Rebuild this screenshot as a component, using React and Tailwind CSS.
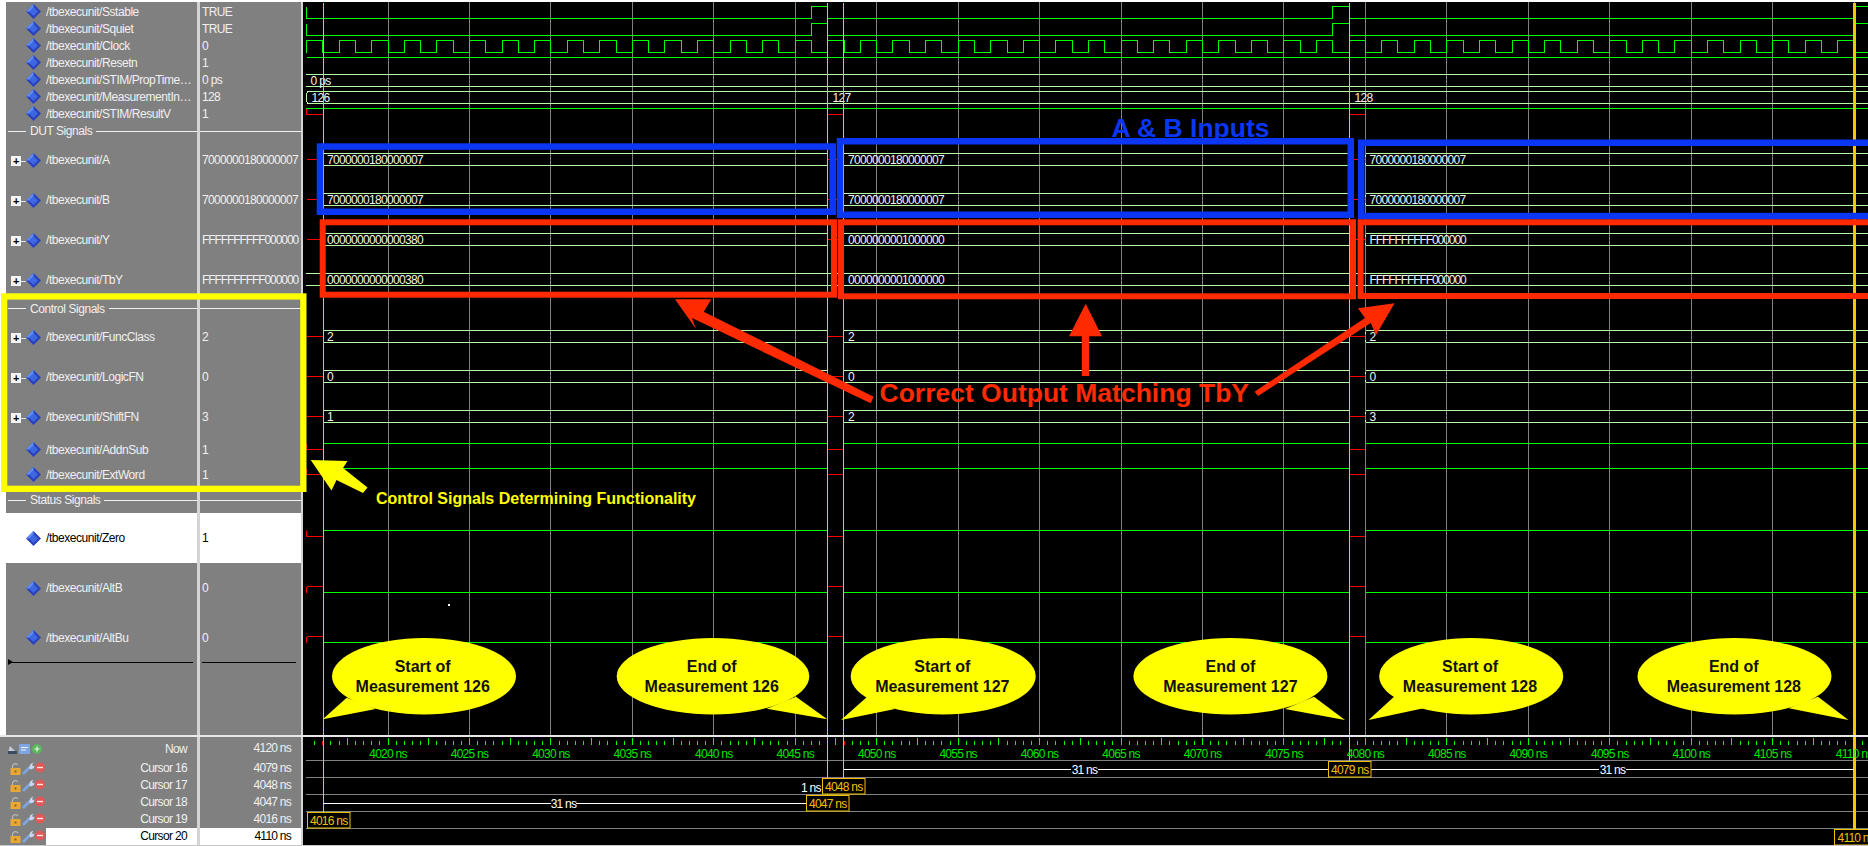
import React from "react";

// time -> pixel on the page, 4020 ns gridline sits at x=388
const X = (t) => 388 + (t - 4020) * 16.29;

const CURSORS = [
  { x: 323.5, bottom: 812 },
  { x: 827.5, bottom: 795 },
  { x: 843.5, bottom: 778 },
  { x: 1349.5, bottom: 761 },
];
const SEGS = [
  [324, 827],
  [844, 1349],
  [1366, 1868],
];
const GAPS = [
  [306.5, 323],
  [828, 843],
  [1350, 1365],
];

const rows = [
  { name: "/tbexecunit/Sstable", value: "TRUE", h: 17 },
  { name: "/tbexecunit/Squiet", value: "TRUE", h: 17 },
  { name: "/tbexecunit/Clock", value: "0", h: 17 },
  { name: "/tbexecunit/Resetn", value: "1", h: 17 },
  { name: "/tbexecunit/STIM/PropTime…", value: "0 ps", h: 17 },
  { name: "/tbexecunit/MeasurementIn…", value: "128", h: 17 },
  { name: "/tbexecunit/STIM/ResultV", value: "1", h: 17 },
  { divider: "DUT Signals", h: 18 },
  { name: "/tbexecunit/A", value: "7000000180000007", h: 40, plus: true },
  { name: "/tbexecunit/B", value: "7000000180000007", h: 40, plus: true },
  { name: "/tbexecunit/Y", value: "FFFFFFFFFF000000", h: 40, plus: true },
  { name: "/tbexecunit/TbY", value: "FFFFFFFFFF000000", h: 40, plus: true },
  { divider: "Control Signals", h: 17 },
  { name: "/tbexecunit/FuncClass", value: "2", h: 40, plus: true },
  { name: "/tbexecunit/LogicFN", value: "0", h: 40, plus: true },
  { name: "/tbexecunit/ShiftFN", value: "3", h: 40, plus: true },
  { name: "/tbexecunit/AddnSub", value: "1", h: 25 },
  { name: "/tbexecunit/ExtWord", value: "1", h: 25 },
  { divider: "Status Signals", h: 26 },
  { name: "/tbexecunit/Zero", value: "1", h: 50, selected: true },
  { name: "/tbexecunit/AltB", value: "0", h: 50 },
  { name: "/tbexecunit/AltBu", value: "0", h: 49 },
];

const cursorRows = [
  { name: "Cursor 16", value: "4079 ns" },
  { name: "Cursor 17", value: "4048 ns" },
  { name: "Cursor 18", value: "4047 ns" },
  { name: "Cursor 19", value: "4016 ns" },
  { name: "Cursor 20", value: "4110 ns", selected: true },
];

// y1/y2 are the two bus rails, red = mid line of the X state
const buses = [
  { y1: 153.5, y2: 165.5, red: 159.5, vals: ["7000000180000007", "7000000180000007", "7000000180000007"] },
  { y1: 193.5, y2: 205.5, red: 199.5, vals: ["7000000180000007", "7000000180000007", "7000000180000007"] },
  { y1: 233.5, y2: 245.5, red: 239.5, vals: ["0000000000000380", "0000000001000000", "FFFFFFFFFF000000"] },
  { y1: 330.5, y2: 342.5, red: 336.5, vals: ["2", "2", "2"] },
  { y1: 370.5, y2: 382.5, red: 376.5, vals: ["0", "0", "0"] },
  { y1: 410.5, y2: 422.5, red: 416.5, vals: ["1", "2", "3"] },
];

// green = level line, red = short X state line before each measurement
const levels = [
  { green: 443.5, red: 449.5 },
  { green: 468.5, red: 474.5 },
  { green: 530.5, red: 536.5 },
  { green: 592.5, red: 586.5 },
  { green: 642.5, red: 636.5 },
];

const bubbles = [
  { cx: 424, rx: 92, tail: "346.7,697.7 322.7,719.3 375.7,709", tx: 422.7, a: "Start of", b: "Measurement 126" },
  { cx: 713, rx: 96.3, tail: "796,696.7 827.3,719.3 766.7,708.7", tx: 711.7, a: "End of", b: "Measurement 126" },
  { cx: 943.2, rx: 92.5, tail: "866.7,697.3 841,720 895,709", tx: 942.3, a: "Start of", b: "Measurement 127" },
  { cx: 1230.4, rx: 97, tail: "1314,696.7 1345,720 1285,709", tx: 1230.4, a: "End of", b: "Measurement 127" },
  { cx: 1471.2, rx: 92, tail: "1394,696.7 1368.6,720 1423.5,708.3", tx: 1470, a: "Start of", b: "Measurement 128" },
  { cx: 1734.5, rx: 97, tail: "1818,696.7 1848.5,720 1788.7,708.3", tx: 1733.8, a: "End of", b: "Measurement 128" },
];

function range(from, to, step) {
  const out = [];
  for (let t = from; t <= to + 0.001; t += step) out.push(t);
  return out;
}

function clockPath() {
  let d = `M${X(4015)} 52.5 L${X(4015)} 40.5`;
  for (let t = 4016; t <= 4112; t++) {
    const up = t % 2 === 1;
    d += ` L${X(t)} ${up ? 52.5 : 40.5} L${X(t)} ${up ? 40.5 : 52.5}`;
  }
  return d;
}

// hex strings are squeezed so they keep the 96px width of the reference
function trackFor(v) {
  if (/F/.test(v)) return "tracking-[-1.08px]";
  return "tracking-[-0.67px]";
}

function Diamond() {
  return (
    <svg width="15" height="15" viewBox="0 0 15 15" className="shrink-0">
      <polygon points="7.5,0 15,7.5 7.5,15 0,7.5" fill="#2a40bc" />
      <polygon points="7.5,0 0,7.5 7.5,8" fill="#6190f2" />
      <polygon points="7.5,3 12,7.5 7.5,12 3,7.5" fill="#3d68e2" />
    </svg>
  );
}

function PlusBox() {
  return (
    <div className="flex items-center mt-[2px]">
      <div className="flex h-[10px] w-[10px] items-center justify-center bg-[#f4f4f4] text-[11px] leading-none font-bold text-black">
        +
      </div>
      <div className="h-px w-[5px] bg-[#e0e0e0]" />
    </div>
  );
}

function Divider({ label }) {
  return (
    <div className="flex h-full items-center pl-[2px]">
      <div className="h-px w-[18px] bg-[#f0f0f0]" />
      <span className="px-[4px] text-[#f0f0f0]">{label}</span>
      <div className="h-px flex-1 bg-[#f0f0f0]" />
    </div>
  );
}

function NameColumn() {
  return (
    <div className="w-[191px] bg-[#808080] pt-px tracking-[-0.45px]">
      {rows.map((r, i) => (
        <div key={i} style={{ height: r.h }}>
          {r.divider ? (
            <Divider label={r.divider} />
          ) : (
            <div
              className={`flex h-full items-center whitespace-nowrap ${
                r.plus ? "pl-[5px]" : "pl-[20px]"
              } ${r.selected ? "bg-white text-black" : "text-[#f0f0f0]"}`}
            >
              {r.plus && <PlusBox />}
              <Diamond />
              <span className="ml-[5px]">{r.name}</span>
            </div>
          )}
        </div>
      ))}
      <div className="relative h-px ml-[4px] mr-[4px] bg-black">
        <div className="absolute left-[-2px] top-[-3px] h-0 w-0 border-y-[3.5px] border-l-[5px] border-y-transparent border-l-black" />
      </div>
    </div>
  );
}

function ValueColumn() {
  return (
    <div className="w-[101px] bg-[#808080] pt-px">
      {rows.map((r, i) => (
        <div
          key={i}
          style={{ height: r.h }}
          className={`flex items-center pl-[2px] whitespace-nowrap ${
            r.selected ? "bg-white text-black" : "text-[#f0f0f0]"
          }`}
        >
          {r.divider ? (
            <div className="h-px flex-1 bg-[#f0f0f0] ml-[-2px]" />
          ) : (
            <span className={trackFor(r.value)}>{r.value}</span>
          )}
        </div>
      ))}
      <div className="h-px mx-[2px] mr-[5px] bg-black" />
    </div>
  );
}

function WaveBus({ y1, y2, red, vals }) {
  return (
    <g>
      {GAPS.map(([a, b], i) => (
        <line key={i} x1={a} x2={b} y1={red} y2={red} stroke="#ff0000" />
      ))}
      {SEGS.map(([a, b], i) => (
        <g key={i} stroke="#b8fca8">
          <line x1={a} x2={b} y1={y1} y2={y1} />
          <line x1={a} x2={b} y1={y2} y2={y2} />
          <line x1={a - 0.5} x2={a - 0.5} y1={y1 + 1} y2={y1 + 3} />
          <line x1={a - 0.5} x2={a - 0.5} y1={y2 - 3} y2={y2 - 1} />
          {b < 1400 && <line x1={b} x2={b} y1={y1 + 1} y2={y1 + 3} />}
          {b < 1400 && <line x1={b} x2={b} y1={y2 - 3} y2={y2 - 1} />}
        </g>
      ))}
      {vals.map((v, i) => (
        <text key={i} x={[327, 848, 1369.5][i]} y={y1 + 10.5} fill="#f4f4f4" className={trackFor(v)}>
          {v}
        </text>
      ))}
    </g>
  );
}

function Waves() {
  const grid = range(4020, 4110, 5).map(X);
  return (
    <svg viewBox="303 2 1565 733" className="block h-[733px] w-[1565px]">
      <g stroke="#808080" shapeRendering="crispEdges">
        {grid.map((x) => (
          <line key={x} x1={x} x2={x} y1={2} y2={735} />
        ))}
      </g>

      <g fill="none" stroke="#00ff00" shapeRendering="crispEdges">
        <path d="M306.5 7 V18.5 H811.5 V6.5 H827 M828 18.5 H1332.5 V6.5 H1349 M1350 18.5 H1854 V6.5 H1868" />
        <path d="M306.5 24 V35.5 H811.5 V23.5 H827 M828 35.5 H1332.5 V23.5 H1349 M1350 35.5 H1854 V23.5 H1868" />
        <path d={clockPath()} />
        <path d="M307 57.5 H1868" />
        <path d="M306 108.5 H1868" />
      </g>
      <g stroke="#ff0000" shapeRendering="crispEdges">
        <line x1={323.5} x2={323.5} y1={40} y2={53} />
        <line x1={827.5} x2={827.5} y1={6} y2={53} />
        <line x1={843.5} x2={843.5} y1={40} y2={53} />
        <line x1={1349.5} x2={1349.5} y1={6} y2={53} />
        {GAPS.map(([a, b], i) => (
          <line key={i} x1={a} x2={b} y1={114.5} y2={114.5} />
        ))}
        <line x1={306.5} x2={306.5} y1={109} y2={114.5} />
      </g>

      <g stroke="#b8fca8" shapeRendering="crispEdges">
        <line x1={306} x2={1868} y1={74.5} y2={74.5} />
        <line x1={306} x2={1868} y1={86.5} y2={86.5} />
        <line x1={308} x2={1868} y1={91.5} y2={91.5} />
        <line x1={308} x2={1868} y1={103.5} y2={103.5} />
        <path d="M308 91.5 L306.5 94 V101 L308 103.5" fill="none" />
        <line x1={306} x2={1868} y1={273.5} y2={273.5} />
        <line x1={306} x2={1868} y1={285.5} y2={285.5} />
      </g>
      <g fill="#f4f4f4" className="tracking-[-0.67px]">
        <text x={310.5} y={85}>0 ps</text>
        <text x={311.5} y={102}>126</text>
        <text x={832.5} y={102}>127</text>
        <text x={1354.5} y={102}>128</text>
      </g>

      <g shapeRendering="crispEdges">
        {buses.map((b, i) => (
          <WaveBus key={i} {...b} />
        ))}
      </g>
      <text x={327} y={284} fill="#f4f4f4" className="tracking-[-0.67px]">0000000000000380</text>
      <text x={848} y={284} fill="#f4f4f4" className="tracking-[-0.67px]">0000000001000000</text>
      <text x={1369.5} y={284} fill="#f4f4f4" className="tracking-[-1.08px]">FFFFFFFFFF000000</text>

      <g shapeRendering="crispEdges">
        {levels.map((l, i) => (
          <g key={i}>
            {SEGS.map(([a, b], j) => (
              <line key={j} x1={a} x2={b} y1={l.green} y2={l.green} stroke="#00ff00" />
            ))}
            {GAPS.map(([a, b], j) => (
              <line key={j} x1={a} x2={b} y1={l.red} y2={l.red} stroke="#ff0000" />
            ))}
            <line x1={306.5} x2={306.5} y1={Math.min(l.green, l.red)} y2={Math.max(l.green, l.red)} stroke="#ff0000" />
          </g>
        ))}
        <rect x={448} y={604} width={2} height={2} fill="#ffffff" />
        {CURSORS.map((c) => (
          <line key={c.x} x1={c.x} x2={c.x} y1={3} y2={735} stroke="#f0c800" />
        ))}
        <rect x={1853} y={3} width={3} height={732} fill="#f0c800" />
      </g>
    </svg>
  );
}

function CursorBox({ x, y, w = 42.5, label }) {
  return (
    <g>
      <rect x={x} y={y} width={w} height={15.5} fill="#000000" stroke="#f0c000" />
      <text x={x + w / 2} y={y + 12} textAnchor="middle" fill="#f0c000">
        {label}
      </text>
    </g>
  );
}

function Ruler() {
  const ticks = range(4015.5, 4112, 0.5);
  return (
    <svg viewBox="303 737 1565 108" className="block h-[108px] w-[1565px] tracking-[-0.75px]">
      <g shapeRendering="crispEdges">
        {ticks.map((t) => {
          const tall = (t * 2) % 5 === 0;
          const isCursor = [4016, 4047, 4048, 4110].includes(t);
          return (
            <line
              key={t}
              x1={X(t)}
              x2={X(t)}
              y1={tall ? 738 : 741}
              y2={745}
              stroke={isCursor ? "#ff0000" : "#00ff00"}
            />
          );
        })}
        {[760.5, 777.5, 794.5, 811.5, 828.5].map((y) => (
          <line key={y} x1={306} x2={1868} y1={y} y2={y} stroke="#808080" />
        ))}
        {CURSORS.map((c) => (
          <line key={c.x} x1={c.x} x2={c.x} y1={737} y2={c.bottom} stroke="#f0c800" />
        ))}
        <rect x={1853} y={737} width={3} height={92} fill="#f0c800" />
        <path
          d="M844 769.5 H1071 M1098 769.5 H1599 M1626 769.5 H1854 M323 803.5 H551 M576 803.5 H806"
          stroke="#ffffff"
          fill="none"
        />
      </g>
      {range(4020, 4110, 5).map((t) => (
        <text key={t} x={X(t)} y={758} textAnchor="middle" fill="#00e800">
          {t} ns
        </text>
      ))}
      <g fill="#ffffff">
        <text x={1084.5} y={773.5} textAnchor="middle">31 ns</text>
        <text x={1612.5} y={773.5} textAnchor="middle">31 ns</text>
        <text x={563.5} y={807.5} textAnchor="middle">31 ns</text>
        <text x={801} y={791.5}>1 ns</text>
      </g>
      <CursorBox x={1328.5} y={761.5} label="4079 ns" />
      <CursorBox x={822.5} y={778.5} label="4048 ns" />
      <CursorBox x={806.5} y={795.5} label="4047 ns" />
      <CursorBox x={307.5} y={812.5} label="4016 ns" />
      <CursorBox x={1834.5} y={829.5} label="4110 ns" />
    </svg>
  );
}

function NowIcons() {
  return (
    <svg width="36" height="12" viewBox="0 0 36 12" className="ml-[7px] shrink-0">
      <path d="M1 9 L3 3 L6 6 L9 9 Z" fill="#c4ccd8" />
      <rect x="1" y="8" width="9" height="3" fill="#3c4a60" />
      <rect x="12" y="1" width="11" height="10" rx="1" fill="#7ea6e0" />
      <rect x="14" y="4" width="7" height="1" fill="#f0f4fa" />
      <rect x="14" y="6.5" width="5" height="1" fill="#f0f4fa" />
      <circle cx="30" cy="6" r="5" fill="#5cb85c" />
      <path d="M27.5 6 H32.5 M30 3.5 V8.5" stroke="#e8f8e8" strokeWidth="1.2" />
    </svg>
  );
}

function CursorIcons() {
  return (
    <svg width="36" height="13" viewBox="0 0 36 13" className="ml-[10px] shrink-0">
      <path d="M2.5 6 V4 A3 3 0 0 1 8 3" fill="none" stroke="#b8b8b8" strokeWidth="1.2" />
      <rect x="0.5" y="6" width="10" height="7" fill="#e8a838" />
      <rect x="4.5" y="8.5" width="2" height="2" fill="#906010" />
      <path d="M13 12 L20 5" stroke="#7ea6e0" strokeWidth="2.6" />
      <path d="M19 6 L20.5 2 L23.5 0.5 L22 3 L23.5 4.5 L24.5 3 L24 6 L21 7.5 Z" fill="#c8d8f0" />
      <circle cx="30" cy="5.5" r="5" fill="#e25858" />
      <rect x="27" y="4.8" width="6" height="1.4" fill="#f8e8e8" />
    </svg>
  );
}

function Annotations() {
  const frame = (x1, y1, x2, y2, th, color) => (
    <rect
      x={x1 + th / 2}
      y={y1 + th / 2}
      width={x2 - x1 - th}
      height={y2 - y1 - th}
      fill="none"
      stroke={color}
      strokeWidth={th}
    />
  );
  return (
    <svg viewBox="0 0 1868 846" className="pointer-events-none absolute inset-0 h-full w-full font-bold tracking-normal">
      {frame(316.7, 143.3, 836, 215, 6.5, "#0a36f4")}
      {frame(836.7, 138, 1354, 218, 6.5, "#0a36f4")}
      {frame(1358, 139.5, 1900, 219.3, 6.5, "#0a36f4")}
      {frame(319.7, 219.3, 837, 297.7, 6, "#ff2a00")}
      {frame(838, 219.3, 1356, 299.3, 6, "#ff2a00")}
      {frame(1357.6, 219.3, 1900, 299, 6, "#ff2a00")}
      {frame(1, 293.3, 306.5, 492, 6.3, "#ffff00")}

      <text x={1111.5} y={137} className="text-[26.5px]" fill="#0a36f4">A &amp; B Inputs</text>
      <text x={879.5} y={402} className="text-[26.5px]" fill="#ff2a00">Correct Output Matching TbY</text>
      <text x={376} y={504} className="text-[16px]" fill="#ffff00">Control Signals Determining Functionality</text>

      <polygon
        points="310.7,460 347.5,461 343,468 367.5,487.5 363,493 336.5,480 331.5,490.5"
        fill="#ffff00"
      />
      <g fill="#ff2a00">
        <polygon points="675,299.3 711.4,299.3 703.7,311.7 873.6,396.7 870.7,403.3 692,318 696,329" />
        <polygon points="1085.7,303.7 1102,336.3 1089,336.3 1089,376 1081.8,376 1081.8,336.3 1069,336.3" />
        <polygon points="1394.6,303.3 1376,335 1370.7,323 1258,396 1254.6,391.7 1365,318 1358,308.3" />
      </g>

      {bubbles.map((b) => (
        <g key={b.cx}>
          <ellipse cx={b.cx} cy={676.3} rx={b.rx} ry={38.2} fill="#ffff00" />
          <polygon points={b.tail} fill="#ffff00" />
          <text x={b.tx} y={672} textAnchor="middle" className="text-[16px]" fill="#111111">{b.a}</text>
          <text x={b.tx} y={691.5} textAnchor="middle" className="text-[16px]" fill="#111111">{b.b}</text>
        </g>
      ))}
    </svg>
  );
}

export default function App() {
  return (
    <div className="relative h-[846px] w-[1868px] overflow-hidden bg-black font-['Liberation_Sans',sans-serif] text-[12px]">
      <div className="h-[2px] bg-white" />
      <div className="flex h-[733px]">
        <div className="w-[6px] bg-white" />
        <NameColumn />
        <div className="w-[3px] bg-[#d4d4d4]" />
        <ValueColumn />
        <div className="w-[2px] bg-[#d4d4d4]" />
        <Waves />
      </div>
      <div className="h-[2px] bg-[#e8e8e8]" />
      <div className="flex h-[108px]">
        <div className="w-[197px] bg-[#808080] text-[#f0f0f0] tracking-[-0.65px]">
          <div className="flex h-[23px] items-center justify-between pr-[10px]">
            <NowIcons />
            <span>Now</span>
          </div>
          {cursorRows.map((c) => (
            <div key={c.name} className="flex h-[17px] items-center">
              <div className="w-[46px] shrink-0">
                <CursorIcons />
              </div>
              <div
                className={`flex-1 pr-[10px] text-right leading-[17px] ${
                  c.selected ? "bg-white text-black" : ""
                }`}
              >
                {c.name}
              </div>
            </div>
          ))}
        </div>
        <div className="w-[3px] bg-[#d4d4d4]" />
        <div className="w-[101px] bg-[#808080] text-right text-[#f0f0f0] tracking-[-0.75px]">
          <div className="h-[23px] pr-[10px] leading-[23px]">4120 ns</div>
          {cursorRows.map((c) => (
            <div
              key={c.name}
              className={`h-[17px] pr-[10px] leading-[17px] ${c.selected ? "bg-white text-black" : ""}`}
            >
              {c.value}
            </div>
          ))}
        </div>
        <div className="w-[2px] bg-[#d4d4d4]" />
        <Ruler />
      </div>
      <div className="h-px bg-[#c8c8c8]" />
      <Annotations />
    </div>
  );
}
